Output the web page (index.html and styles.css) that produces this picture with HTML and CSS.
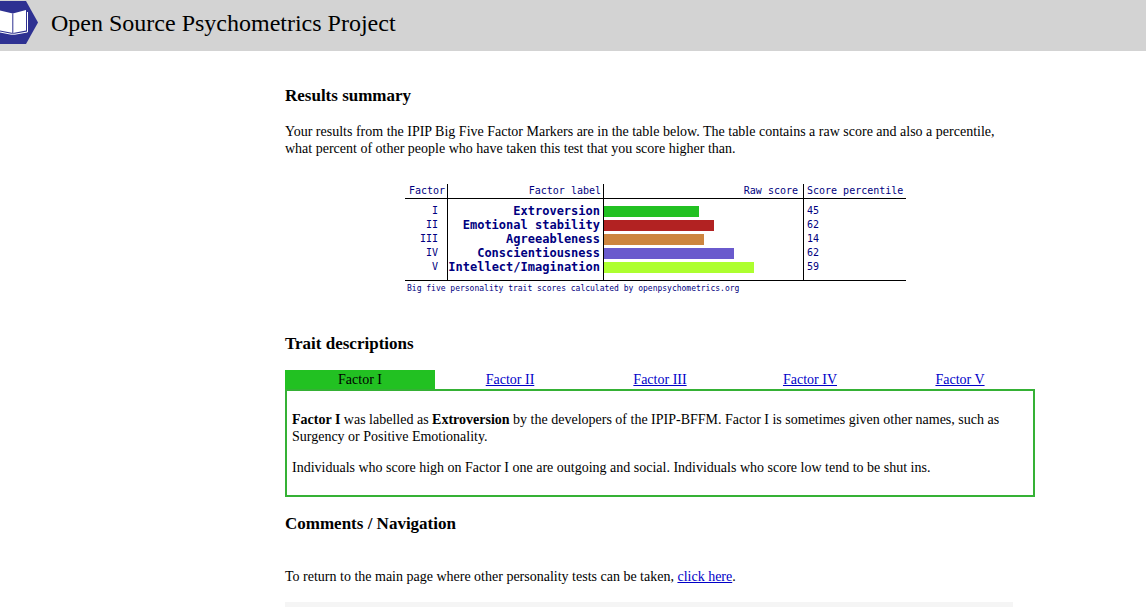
FILE: index.html
```html
<!DOCTYPE html>
<html lang="en">
<head>
<meta charset="utf-8">
<meta name="viewport" content="width=device-width, initial-scale=1">
<title>Open Source Psychometrics Project</title>
<link rel="stylesheet" href="styles.css">
</head>
<body>
<header class="site-header">
  <svg class="logo" width="38" height="43" viewBox="0 0 38 43" aria-hidden="true">
    <path fill="#2e3192" d="M0 0H26L38 21.5L26 43H0Z"/>
    <path fill="#fff" d="M0 9.5L12.8 12.5L26 9V29.5L13 32L0 29.5Z"/>
    <path fill="none" stroke="#2e3192" stroke-width="1" d="M12.8 12.5V32"/>
    <path fill="none" stroke="#fff" stroke-width="1" d="M27.5 11V31L15 33.2H11L0 31"/>
  </svg>
  <span class="site-title">Open Source Psychometrics Project</span>
</header>
<main class="content">
  <section>
    <h3 class="heading">Results summary</h3>
    <p class="text">Your results from the IPIP Big Five Factor Markers are in the table below. The table contains a raw score and also a percentile, what percent of other people who have taken this test that you score higher than.</p>
    <table class="scores">
      <caption class="scores-note">Big five personality trait scores calculated by openpsychometrics.org</caption>
      <thead>
        <tr><th class="factor">Factor</th><th class="label">Factor label</th><th class="raw">Raw score</th><th class="percentile">Score percentile</th></tr>
      </thead>
      <tbody>
        <tr><td class="factor">I</td><td class="label">Extroversion</td><td class="raw"><div class="bar green" style="width:95px"></div></td><td class="percentile">45</td></tr>
        <tr><td class="factor">II</td><td class="label">Emotional stability</td><td class="raw"><div class="bar red" style="width:110px"></div></td><td class="percentile">62</td></tr>
        <tr><td class="factor">III</td><td class="label">Agreeableness</td><td class="raw"><div class="bar orange" style="width:100px"></div></td><td class="percentile">14</td></tr>
        <tr><td class="factor">IV</td><td class="label">Conscientiousness</td><td class="raw"><div class="bar violet" style="width:130px"></div></td><td class="percentile">62</td></tr>
        <tr><td class="factor">V</td><td class="label">Intellect/Imagination</td><td class="raw"><div class="bar lime" style="width:150px"></div></td><td class="percentile">59</td></tr>
      </tbody>
    </table>
  </section>
  <section>
    <h3 class="heading">Trait descriptions</h3>
    <nav class="tabs">
      <span class="tab active">Factor I</span>
      <span class="tab"><a href="#factor2">Factor II</a></span>
      <span class="tab"><a href="#factor3">Factor III</a></span>
      <span class="tab"><a href="#factor4">Factor IV</a></span>
      <span class="tab"><a href="#factor5">Factor V</a></span>
    </nav>
    <div class="panel">
      <p class="text"><b>Factor I</b> was labelled as <b>Extroversion</b> by the developers of the IPIP-BFFM. Factor I is sometimes given other names, such as Surgency or Positive Emotionality.</p>
      <p class="text">Individuals who score high on Factor I one are outgoing and social. Individuals who score low tend to be shut ins.</p>
    </div>
  </section>
  <section>
    <h3 class="heading">Comments / Navigation</h3>
    <p class="text return">To return to the main page where other personality tests can be taken, <a href="#main">click here</a>.</p>
    <div class="footer-box"></div>
  </section>
</main>
</body>
</html>
```
FILE: styles.css
```css
body {
  margin: 0;
  background: #fff;
  color: #000;
  font-family: "Liberation Serif", "Times New Roman", serif;
  font-size: 14px;
  line-height: 17px;
}
a { color: #0000c8; }
.site-header {
  display: flex;
  align-items: center;
  gap: 13px;
  box-sizing: border-box;
  padding: 1px 0 7px;
  background: #d3d3d3;
}
.logo { display: block; }
.site-title { font-size: 24px; line-height: 28px; }
.content {
  max-width: 750px;
  margin-left: 285px;
  padding-top: 35px;
}
.heading { margin: 0; font-size: 17px; line-height: 20px; }
.text { max-width: 735px; margin: 17px 0 0; }
.scores {
  width: 501px;
  margin: 27px 0 38px 120px;
  border-spacing: 0;
  table-layout: fixed;
  color: #000080;
  font: 10px/14px "DejaVu Sans Mono", monospace;
}
.scores th { padding: 0; font-weight: normal; border-bottom: 1px solid #000; }
.scores td { padding: 0; height: 14px; }
.scores tbody tr:first-child td { padding-top: 5px; }
.scores tbody tr:last-child td { padding-bottom: 6px; border-bottom: 1px solid #000; }
.scores .factor { width: 43px; box-sizing: border-box; text-align: right; border-right: 1px solid #000; }
.scores th.factor { padding-right: 2px; }
.scores td.factor { padding-right: 9px; }
.scores .label { width: 156px; box-sizing: border-box; text-align: right; border-right: 1px solid #000; }
.scores th.label { padding-right: 2px; }
.scores td.label { padding-right: 3px; font-size: 12px; font-weight: bold; }
.scores .raw { width: 200px; box-sizing: border-box; text-align: right; border-right: 1px solid #000; }
.scores th.raw { padding-right: 5px; }
.scores .percentile { padding-left: 3px; text-align: left; }
.scores-note {
  caption-side: bottom;
  padding: 1px 0 0 2px;
  text-align: left;
  font-size: 8px;
}
.bar { height: 11px; }
.green { background: #22c122; }
.red { background: #b22222; }
.orange { background: #cd853f; }
.violet { background: #6a5acd; }
.lime { background: #adff2f; }
.tabs {
  display: grid;
  grid-template-columns: repeat(5, 1fr);
  margin-top: 16px;
  text-align: center;
}
.tab { padding: 1px 0; }
.active { background: #22c122; }
.panel { display: flow-root; padding: 3px 5px 19px; border: 2px solid #35b135; margin-bottom: 17px; }
.panel .text { margin: 17px 0 0; }
.panel .text + .text { margin-top: 14px; }
.return { margin-top: 34px; }
.footer-box { height: 5px; max-width: 728px; margin-top: 17px; background: #f5f5f5; }
```
